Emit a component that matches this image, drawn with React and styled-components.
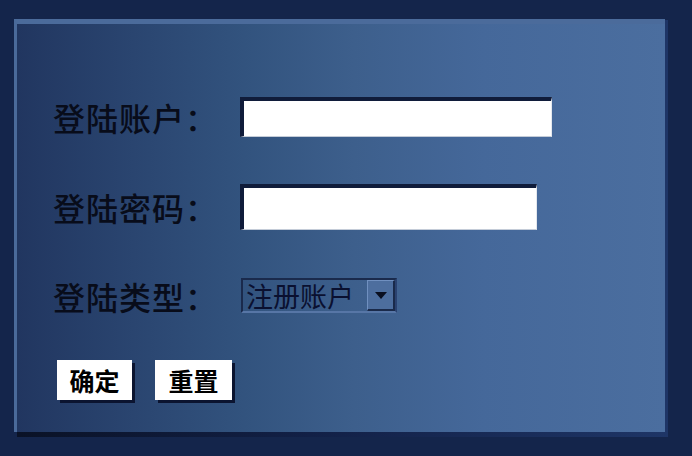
import React from "react";
import styled, { createGlobalStyle } from "styled-components";

const Global = createGlobalStyle`
  html, body {
    margin: 0;
    padding: 0;
    background: #14254b;
  }
  body {
    font-family: "Noto Sans CJK SC", "Noto Sans", sans-serif;
  }
`;

const Page = styled.div`
  position: relative;
  z-index: 0;
  width: 692px;
  height: 456px;
  box-sizing: border-box;
  padding: 19px 27px 24px 14px;
  background: #14254b;
`;

const Panel = styled.form`
  position: relative;
  box-sizing: border-box;
  width: 651px;
  height: 413px;
  border-top: 5px solid #4b6b9b;
  border-left: 3px solid #4a6a9a;
  background: linear-gradient(
    to right,
    #213660 0%,
    #2a4570 18%,
    #32537e 35%,
    #3d5f8c 52%,
    #45689a 72%,
    #4b6e9f 100%
  );
  padding: 73px 0 0 36px;
  display: flex;
  flex-direction: column;

  &::after {
    content: "";
    position: absolute;
    left: 0;
    top: -4px;
    right: -3px;
    bottom: -5px;
    z-index: -1;
    background: linear-gradient(to right, #0a1226 0%, #122046 45%, #1e3566 100%);
  }
`;

const Row = styled.div`
  display: flex;
  align-items: center;
  height: ${(p) => p.$h}px;
  margin-top: ${(p) => p.$mt || 0}px;
`;

const Label = styled.label`
  width: 187px;
  flex: none;
  font-size: 32px;
  font-weight: 500;
  line-height: 1;
  color: #080c1a;
  white-space: nowrap;
  letter-spacing: 1px;
`;

const TextBox = styled.div`
  box-sizing: border-box;
  width: ${(p) => p.$w}px;
  height: ${(p) => p.$h}px;
  background: #ffffff;
  border-top: 4px solid #101c3a;
  border-left: 4px solid #101c3a;
  border-right: 1px solid #e4e8ee;
  border-bottom: 1px solid #c4ccd8;
`;

const Select = styled.div`
  box-sizing: border-box;
  width: 156px;
  height: 35px;
  margin-left: 1px;
  display: flex;
  align-items: center;
  border-top: 2px solid #1a2a4c;
  border-left: 2px solid #1a2a4c;
  border-right: 2px solid #2a4270;
  border-bottom: 2px solid #5776a6;
`;

const SelectText = styled.span`
  font-size: 27px;
  line-height: 1;
  color: #0a1030;
  padding-left: 3px;
  flex: 1;
  white-space: nowrap;
`;

const DropButton = styled.div`
  box-sizing: border-box;
  width: 28px;
  height: 31px;
  display: flex;
  align-items: center;
  justify-content: center;
  background: #4d6e9e;
  border-top: 1px solid #7090c0;
  border-left: 1px solid #7090c0;
  border-right: 2px solid #1a2a4a;
  border-bottom: 2px solid #1a2a4a;
`;

const Buttons = styled.div`
  display: flex;
  gap: 23px;
  margin-top: 47px;
  margin-left: 4px;
`;

const Button = styled.button`
  box-sizing: border-box;
  width: ${(p) => p.$w}px;
  height: 40px;
  padding: 0;
  border: none;
  background: #ffffff;
  box-shadow: 3px 3px 0 #0b1430;
  font-family: "Noto Sans CJK SC", "Noto Sans", sans-serif;
  font-size: 25px;
  font-weight: 700;
  color: #000000;
  line-height: 1;
`;

export default function App() {
  return (
    <>
      <Global />
      <Page>
        <Panel onSubmit={(e) => e.preventDefault()}>
          <Row $h={40}>
            <Label>登陆账户：</Label>
            <TextBox $w={312} $h={40} />
          </Row>
          <Row $h={46} $mt={47}>
            <Label>登陆密码：</Label>
            <TextBox $w={297} $h={46} />
          </Row>
          <Row $h={35} $mt={48}>
            <Label>登陆类型：</Label>
            <Select>
              <SelectText>注册账户</SelectText>
              <DropButton>
                <svg width="12" height="7" viewBox="0 0 12 7">
                  <path d="M0 0 H12 L6 7 Z" fill="#0a0f20" />
                </svg>
              </DropButton>
            </Select>
          </Row>
          <Buttons>
            <Button type="button" $w={75}>确定</Button>
            <Button type="button" $w={77}>重置</Button>
          </Buttons>
        </Panel>
      </Page>
    </>
  );
}
